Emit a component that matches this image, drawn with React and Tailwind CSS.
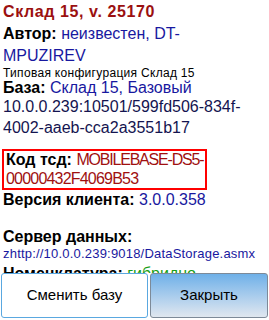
export default function App() {
  const font = { fontFamily: '"Liberation Sans", Arial, sans-serif' };
  const blue = "text-[#1818a0]";
  return (
    <div className="w-[269px] h-[320px] bg-white flex flex-col overflow-hidden text-black" style={font}>
      <div className="h-[273px] overflow-hidden pl-[3px] text-[16px] whitespace-nowrap">
        <div className="font-bold text-[#9b1010] leading-[23px] tracking-[0.6px]">Склад 15, v. 25170</div>
        <div className="leading-[21px]">
          <span className="font-bold">Автор: </span>
          <span className={blue}>неизвестен, DT-</span>
        </div>
        <div className={`leading-[23px] ${blue}`}>MPUZIREV</div>
        <div className="text-[12px] leading-[12px] tracking-[0.3px]">Типовая конфигурация Склад 15</div>
        <div className="leading-[17px]">
          <span className="font-bold">База: </span>
          <span className={blue}>Склад 15, Базовый</span>
        </div>
        <div className="text-[#141450] leading-[21px]">10.0.0.239:10501/599fd506-834f-</div>
        <div className="text-[#141450] leading-[21px]">4002-aaeb-cca2a3551b17</div>
        <div className="mt-[11px] -ml-[1px] w-[205px] border-2 border-[#ff0000] pl-[2px] leading-[18.5px]">
          <div>
            <span className="font-bold">Код тсд: </span>
            <span className="text-[#a01010] tracking-[-1.2px]">MOBILEBASE-DS5-</span>
          </div>
          <div className="text-[#a01010] tracking-[-0.8px]">00000432F4069B53</div>
        </div>
        <div className="leading-[19px]">
          <span className="font-bold">Версия клиента: </span>
          <span className={blue}>3.0.0.358</span>
        </div>
        <div className="mt-[18px] font-bold leading-[19px]">Сервер данных:</div>
        <div className={`text-[13px] leading-[15px] tracking-[0.2px] ${blue}`}>zhttp://10.0.0.239:9018/DataStorage.asmx</div>
        <div className="mt-[3px] leading-[19px]">
          <span className="font-bold">Номенклатура: </span>
          <span className="text-[#18a018]">гибридно</span>
        </div>
      </div>
      <div className="h-[47px] flex gap-[2px] pl-[1px] pr-[1px] pb-[2px] text-[15px]">
        <button className="w-[147px] rounded-[3px] border border-[#5aa8e0] bg-white flex items-center justify-center">Сменить базу</button>
        <button className="flex-1 rounded-[3px] border border-[#7d8a98] bg-gradient-to-b from-[#6eb0e8] to-[#e0e7ef] flex items-center justify-center">Закрыть</button>
      </div>
    </div>
  );
}
